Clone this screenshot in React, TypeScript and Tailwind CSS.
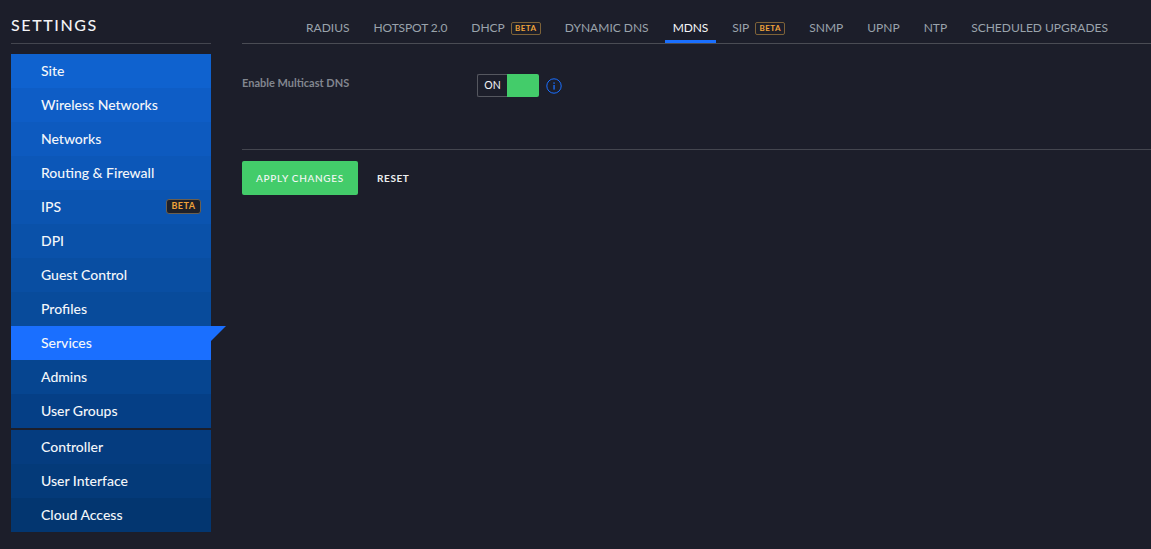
const SITE_ITEMS = [
  { label: "Site", bg: "bg-[#0f62cf]" },
  { label: "Wireless Networks", bg: "bg-[#0e5dc6]" },
  { label: "Networks", bg: "bg-[#0d5abf]" },
  { label: "Routing & Firewall", bg: "bg-[#0c57b8]" },
  { label: "IPS", bg: "bg-[#0b54b0]", beta: true },
  { label: "DPI", bg: "bg-[#0a51a9]" },
  { label: "Guest Control", bg: "bg-[#094ea2]" },
  { label: "Profiles", bg: "bg-[#084b9b]" },
  { label: "Services", bg: "bg-[#1a6fff]", active: true },
  { label: "Admins", bg: "bg-[#064590]" },
  { label: "User Groups", bg: "bg-[#053f86]" },
];

const CONTROLLER_ITEMS = [
  { label: "Controller", bg: "bg-[#053c7f]" },
  { label: "User Interface", bg: "bg-[#043a79]" },
  { label: "Cloud Access", bg: "bg-[#033670]" },
];

const TABS = [
  { label: "RADIUS" },
  { label: "HOTSPOT 2.0", tight: true },
  { label: "DHCP", beta: true },
  { label: "DYNAMIC DNS" },
  { label: "MDNS", active: true, tight: true },
  { label: "SIP", beta: true },
  { label: "SNMP" },
  { label: "UPNP" },
  { label: "NTP" },
  { label: "SCHEDULED UPGRADES" },
];

function SideRow({ item }: { item: { label: string; bg: string; beta?: boolean; active?: boolean } }) {
  return (
    <div className={`relative flex h-[34px] items-center justify-between pb-[2px] pl-[30px] pr-[10px] text-[14px] font-medium text-[#f3f6fa] ${item.bg}`}>
      <span>{item.label}</span>
      {item.beta && (
        <span className="flex h-[15px] w-[35px] items-center justify-center rounded-[3px] border border-[#6b5f4f] bg-[#1e2029] text-[9px] font-bold tracking-[0.5px] text-[#f0a33a]">
          BETA
        </span>
      )}
      {item.active && (
        <span className="absolute left-full top-0 h-0 w-0 border-r-[15px] border-t-[15px] border-r-transparent border-t-[#1a6fff]" />
      )}
    </div>
  );
}

export default function App() {
  return (
    <div className="flex h-[549px] w-[1151px] overflow-hidden bg-[#1c1e2a] font-['Lato',sans-serif]">
      <aside className="ml-[11px] w-[200px] shrink-0">
        <div className="flex h-[44px] items-end border-b border-[#44464f] pb-[8px] text-[16px] font-medium leading-[20px] tracking-[1.6px] text-[#f3f4f6]">
          SETTINGS
        </div>
        <div className="mt-[10px]">
          {SITE_ITEMS.map((item) => (
            <SideRow key={item.label} item={item} />
          ))}
        </div>
        <div className="mt-[2px]">
          {CONTROLLER_ITEMS.map((item) => (
            <SideRow key={item.label} item={item} />
          ))}
        </div>
      </aside>

      <main className="ml-[31px] flex-1">
        <nav className="flex h-[44px] items-end gap-2 border-b border-[#4a4c54] pl-[56px]">
          {TABS.map((tab) => (
            <div
              key={tab.label}
              className={`flex h-[44px] items-center gap-[6px] border-b-[3px] px-2 pt-[17px] text-[12px] ${
                tab.active ? "border-[#1a6fff] text-[#f5f6f8]" : "border-transparent text-[#9aa3ac]"
              } ${tab.tight ? "tracking-[-0.1px]" : ""}`}
            >
              <span>{tab.label}</span>
              {tab.beta && (
                <span className="flex h-[13px] w-[30px] items-center justify-center rounded-[2px] border border-[#7d6238] text-[8px] font-bold tracking-[0.5px] text-[#f0a33a]">
                  BETA
                </span>
              )}
            </div>
          ))}
        </nav>

        <section className="flex h-[106px] items-start border-b border-[#44464f] pt-[30px]">
          <div className="w-[235px] pt-[1px] text-[11px] font-bold leading-[16px] text-[#82868f]">Enable Multicast DNS</div>
          <div className="flex h-[23px] w-[62px]">
            <div className="flex w-[30px] items-center justify-center rounded-l-[2px] border border-r-0 border-[#55575f] text-[10.5px] text-[#f3f4f6]">ON</div>
            <div className="flex-1 rounded-r-[2px] bg-[#43cc6a]" />
          </div>
          <svg width="16" height="16" viewBox="0 0 16 16" fill="none" className="ml-[7px] mt-[4px]">
            <circle cx="8" cy="8" r="7.2" stroke="#1a6fff" strokeWidth="1" />
            <rect x="7.4" y="7" width="1.3" height="4.6" fill="#1a6fff" />
            <rect x="7.4" y="4.4" width="1.3" height="1.4" fill="#1a6fff" />
          </svg>
        </section>

        <div className="mt-[11px] flex items-center">
          <button
            type="button"
            className="h-[34px] w-[116px] rounded-[2px] bg-[#43cc6a] text-[10px] font-medium tracking-[0.7px] text-[#f5f7f6]"
          >
            APPLY CHANGES
          </button>
          <button type="button" className="ml-[19px] text-[10px] font-bold tracking-[0.6px] text-[#eceef0]">
            RESET
          </button>
        </div>
      </main>
    </div>
  );
}
